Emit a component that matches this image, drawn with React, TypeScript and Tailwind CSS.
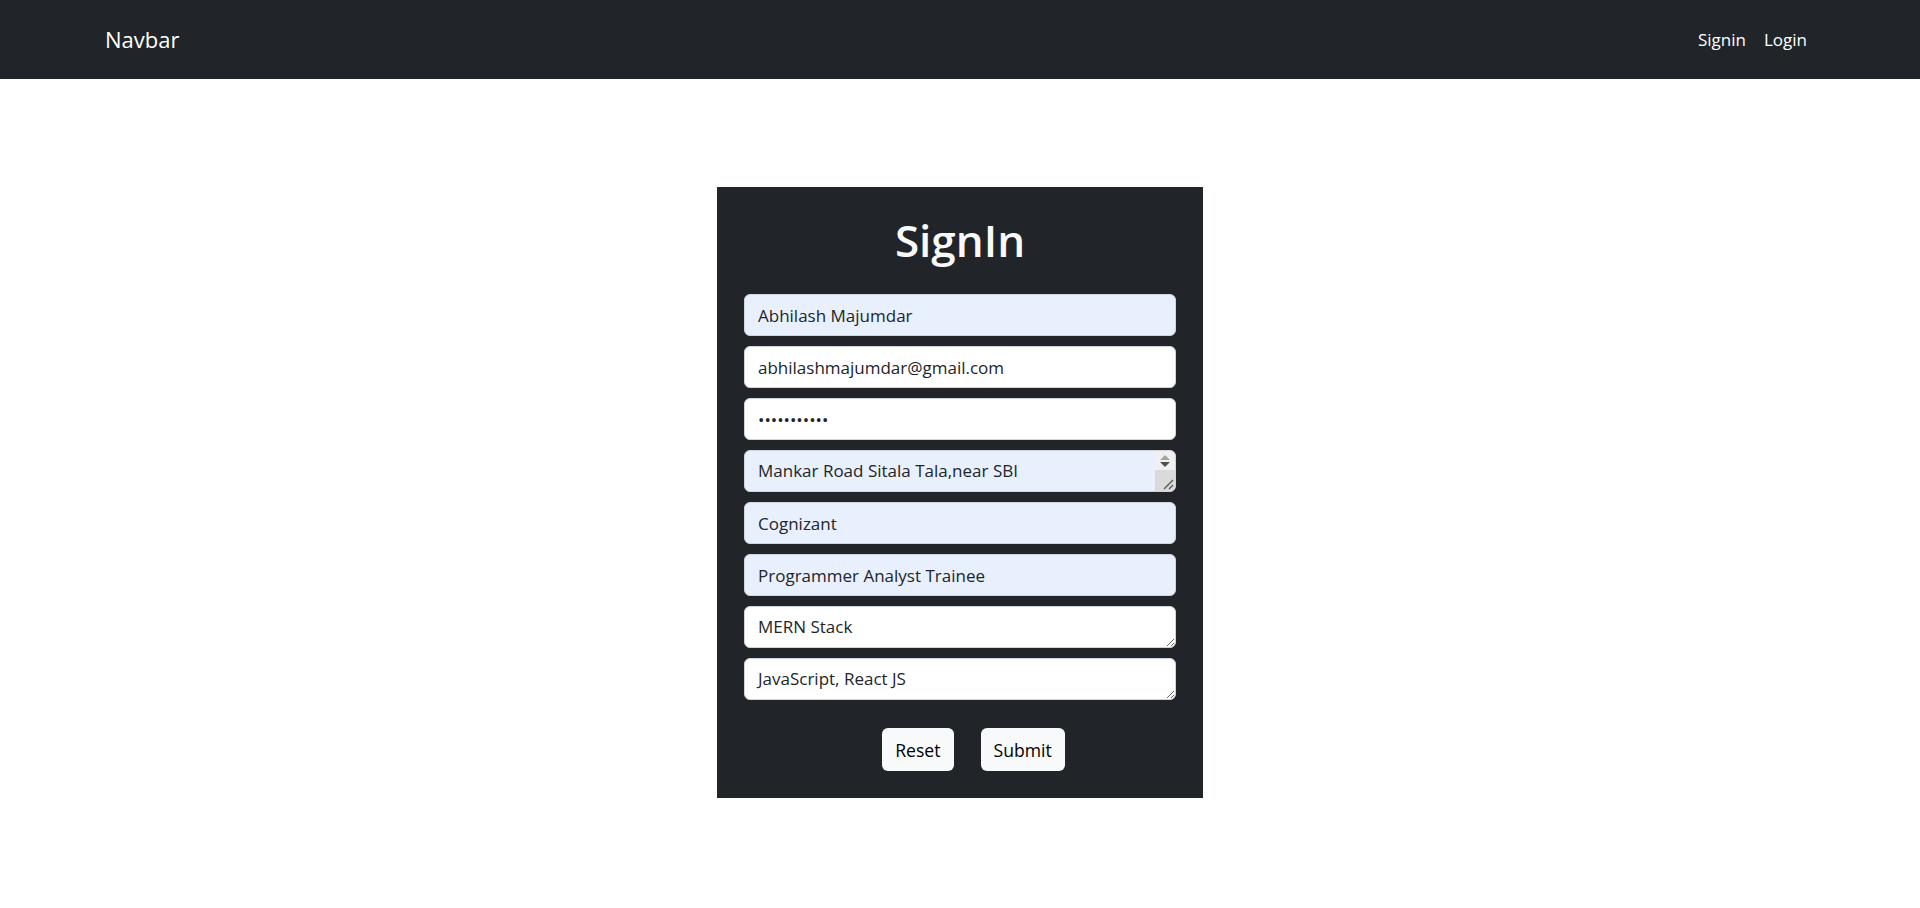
import React from "react";

const font = { fontFamily: '"Segoe UI", "Open Sans", "Noto Sans", sans-serif' };

const base =
  "block w-full h-[42px] rounded-[6px] border border-[#ced4da] px-[13px] py-[7px] text-[17px] leading-[26px] text-[#212529] outline-none";

function FakeScrollbar() {
  return (
    <div className="pointer-events-none absolute top-[1px] right-[1px] bottom-[1px] flex w-[20px] flex-col overflow-hidden rounded-tr-[5px] rounded-br-[5px]">
      <div className="flex h-[19px] flex-col items-center justify-center gap-[2px] bg-[#f0f0f0]">
        <svg width="10" height="5" viewBox="0 0 10 5">
          <polygon points="5,0 10,5 0,5" fill="#a3a3a3" />
        </svg>
        <svg width="10" height="5" viewBox="0 0 10 5">
          <polygon points="0,0 10,0 5,5" fill="#505050" />
        </svg>
      </div>
      <div className="relative flex-1 bg-[#dadada]">
        <svg className="absolute right-[1px] bottom-[1px]" width="12" height="12" viewBox="0 0 12 12">
          <line x1="11" y1="2" x2="2" y2="11" stroke="#555" strokeWidth="1.2" />
          <line x1="11" y1="7" x2="7" y2="11" stroke="#555" strokeWidth="1.2" />
        </svg>
      </div>
    </div>
  );
}

export default function App() {
  return (
    <div className="min-h-[908px] bg-white" style={font}>
      <nav className="flex h-[79px] items-center justify-between bg-[#212529] pl-[105px] pr-[104px]">
        <span className="text-[22px] leading-[33px] text-white">Navbar</span>
        <ul className="flex items-center">
          <li className="px-[9px] text-[17px] leading-[26px] text-white">Signin</li>
          <li className="px-[9px] text-[17px] leading-[26px] text-white">Login</li>
        </ul>
      </nav>
      <div className="flex justify-center pt-[108px]">
        <div className="flex w-[486px] flex-col bg-[#212529] px-[27px] pt-[27px] pb-[27px]">
          <h1 className="mb-[27px] text-center text-[44px] font-semibold leading-[53px] text-[#f8f9fa]">
            SignIn
          </h1>
          <div className="flex flex-col gap-[10px]">
            <input className={`${base} bg-[#e8f0fe]`} defaultValue="Abhilash Majumdar" />
            <input className={`${base} bg-white`} defaultValue="abhilashmajumdar@gmail.com" />
            <input type="password" className={`${base} bg-white`} defaultValue="abcdefghijk" />
            <div className="relative">
              <textarea
                rows={1}
                className={`${base} resize-y overflow-hidden bg-[#e8f0fe] pr-[34px]`}
                defaultValue={"Mankar Road Sitala Tala,near SBI\nnear sonarpur nivas"}
              />
              <FakeScrollbar />
            </div>
            <input className={`${base} bg-[#e8f0fe]`} defaultValue="Cognizant" />
            <input className={`${base} bg-[#e8f0fe]`} defaultValue="Programmer Analyst Trainee" />
            <textarea rows={1} className={`${base} resize-y bg-white`} defaultValue="MERN Stack" />
            <textarea rows={1} className={`${base} resize-y bg-white`} defaultValue="JavaScript, React JS" />
          </div>
          <div className="mt-[28px] flex justify-center gap-[27px] pl-[27px]">
            <button className="h-[43px] rounded-[6px] bg-[#f8f9fa] px-[13px] text-[17.6px] leading-[26px] text-black">
              Reset
            </button>
            <button className="h-[43px] rounded-[6px] bg-[#f8f9fa] px-[13px] text-[17.6px] leading-[26px] text-black">
              Submit
            </button>
          </div>
        </div>
      </div>
    </div>
  );
}
